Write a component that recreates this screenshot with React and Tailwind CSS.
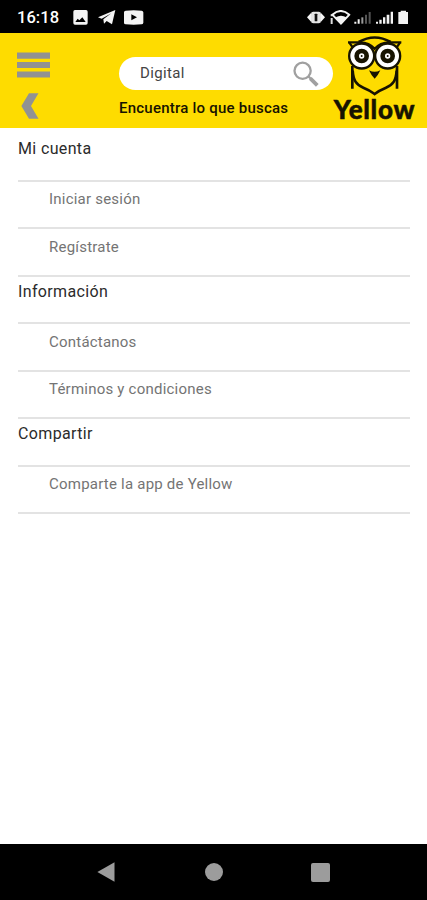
const sections = [
  { title: 'Mi cuenta', items: ['Iniciar sesión', 'Regístrate'] },
  { title: 'Información', items: ['Contáctanos', 'Términos y condiciones'] },
  { title: 'Compartir', items: ['Comparte la app de Yellow'] },
];

function StatusBar() {
  return (
    <div className="flex h-[33px] shrink-0 items-center bg-black pt-[2px] pl-[17px] text-white">
      <span className="w-[56px] pt-[2px] text-[16.5px] leading-none font-medium tracking-[0.05px]">16:18</span>
      <svg className="h-[15px] w-[71px]" viewBox="0 0 213 45" fill="#f4f4f4">
        <path fillRule="evenodd" d="M6 0h33q5 0 5 5v34q0 5-5 5H6q-5 0-5-5V5q0-5 5-5zM7 36h31L28 22l-9 9-5-5z" />
        <path d="M75 22 127 0 117 43 101 33 93 41 91 28 115 10 86 26z" />
        <path fillRule="evenodd" d="M158 2q24-3 48 0 4 0 5 5v31q-1 5-5 5-24 2-48 0-5 0-5-5V7q0-5 5-5zM175 13v18l17-9z" />
      </svg>
      <svg className="ml-[163px] h-[15px] w-[104px]" viewBox="0 0 312 45" fill="#f4f4f4">
        <path d="M0 22 12 9v26zM54 22 42 9v26z" />
        <rect x="12" y="5" width="30" height="35" rx="7" fill="#e4e4e4" />
        <rect x="23" y="11" width="8" height="23" rx="2" fill="#111" />
        <path d="M74 24v18M74 13v6" stroke="#dedede" strokeWidth="6" />
        <path d="M76 14Q101-8 127 14L102 41z" fill="none" stroke="#f4f4f4" strokeWidth="6" strokeLinejoin="round" />
        <path d="M86 22Q102 13 118 22L102 42z" />
        <path d="M142 35h6v6h-6zM152 28h6v13h-6z" />
        <path d="M163 22h6v19h-6z" fill="#999" />
        <path d="M174 14h6v27h-6zM185 6h6v35h-6z" fill="#555" />
        <path d="M207 35h6v6h-6zM217 29h7v12h-7zM228 22h7v19h-7zM239 14h8v27h-8zM251 5h7v36h-7z" />
        <path d="M281 2h16v4h6v36h-29V6h7z" />
      </svg>
    </div>
  );
}

function Owl() {
  return (
    <svg className="h-[62px] w-[57px]" viewBox="60 15 171 186" fill="none" stroke="#171300">
      <path d="M98 36Q146 9 194 36" strokeWidth="8" />
      <path d="M66 37H102Q130 38 146 56Q162 38 190 37H226" strokeWidth="7" />
      <path d="M70 38 80 52M222 38 212 52" strokeWidth="7" />
      <path d="M79 108V176M213 108V176" strokeWidth="8" />
      <path d="M80 122C82 151 90 164 112 173Q132 181 146 192Q160 181 180 173C202 164 210 151 212 122" strokeWidth="8" />
      <g fill="#fff" strokeWidth="7">
        <circle cx="107" cy="78" r="37.5" />
        <circle cx="185" cy="78" r="37.5" />
      </g>
      <g strokeWidth="14" fill="#fff">
        <circle cx="107" cy="78" r="15" />
        <circle cx="185" cy="78" r="15" />
      </g>
      <g fill="#171300" stroke="none">
        <circle cx="107" cy="78" r="3" />
        <circle cx="185" cy="78" r="3" />
        <path d="M129 121Q146 130 163 121Q156 137 146 146Q136 137 129 121z" />
      </g>
    </svg>
  );
}

function Header() {
  return (
    <header className="flex h-[95px] shrink-0 bg-[#fedc00]">
      <div className="w-[119px] pt-[19px] pl-[17px]">
        <svg className="h-[27px] w-[33px]" viewBox="0 0 33 27" fill="#929292">
          <path d="M0 .6h33v6.1H0zM0 10h33v6.1H0zM0 19.4h33v6.2H0z" />
        </svg>
        <svg className="mt-[14px] ml-[4px] h-[27px] w-[18px]" viewBox="0 0 18 27" fill="#929292">
          <path d="M8 .3h9.5L10 13l7.5 12.7H8L.4 13z" />
        </svg>
      </div>
      <div className="w-[214px] pt-[24px]">
        <div className="flex h-[33px] items-center justify-between rounded-full bg-white pr-[14px] pl-[21px]">
          <span className="text-[15px] leading-none tracking-[0.35px] text-[#444]">Digital</span>
          <svg className="h-[26px] w-[26px]" viewBox="0 0 26 26" fill="none" stroke="#a0a0a0">
            <circle cx="9.6" cy="9.8" r="8.1" strokeWidth="2.3" />
            <path d="m15.3 15.3 3 3" strokeWidth="2.3" />
            <path d="m17.3 17.3 7 7" strokeWidth="3.8" />
          </svg>
        </div>
        <p className="mt-[9px] text-[15px] leading-[18px] font-medium tracking-[0.23px] whitespace-nowrap text-[#171300]">
          Encuentra lo que buscas
        </p>
      </div>
      <div className="flex w-[82px] flex-col items-center pt-[2px]">
        <Owl />
        <span className="-mt-[3px] ml-[1px] font-['Lato','Liberation_Sans',sans-serif] text-[26px] leading-[30px] font-black tracking-[0.7px] text-[#171300] [-webkit-text-stroke:0.5px_#171300]">
          Yellow
        </span>
      </div>
    </header>
  );
}

function Menu() {
  return (
    <main className="flex-1 pt-[6.4px] pr-[17px] pl-[18px]">
      {sections.map((section) => (
        <section key={section.title}>
          <h2 className="h-[47.46px] border-b-2 border-[#e3e3e3] pt-[5px] text-[16px] leading-[20px] font-normal tracking-[0.36px] text-[#2b2b2b]">
            {section.title}
          </h2>
          {section.items.map((item) => (
            <div
              key={item}
              className="h-[47.46px] border-b-2 border-[#e3e3e3] pt-[7.6px] pl-[31px] text-[15px] leading-[20px] tracking-[0.22px] text-[#747474]"
            >
              {item}
            </div>
          ))}
        </section>
      ))}
    </main>
  );
}

function NavigationBar() {
  return (
    <nav className="flex h-[56px] shrink-0 items-center justify-between bg-black px-[97px]">
      <svg className="h-[20px] w-[18px]" viewBox="0 0 18 20" fill="#9c9c9c">
        <path d="M.4 10 17.5.2v19.6z" />
      </svg>
      <div className="ml-[1px] h-[18px] w-[18px] rounded-full bg-[#9c9c9c]" />
      <div className="h-[19px] w-[19px] rounded-[2px] bg-[#9c9c9c]" />
    </nav>
  );
}

export default function App() {
  return (
    <div className="flex h-[900px] w-[427px] flex-col overflow-hidden bg-white font-['Roboto','Liberation_Sans',sans-serif]">
      <StatusBar />
      <Header />
      <Menu />
      <NavigationBar />
    </div>
  );
}
